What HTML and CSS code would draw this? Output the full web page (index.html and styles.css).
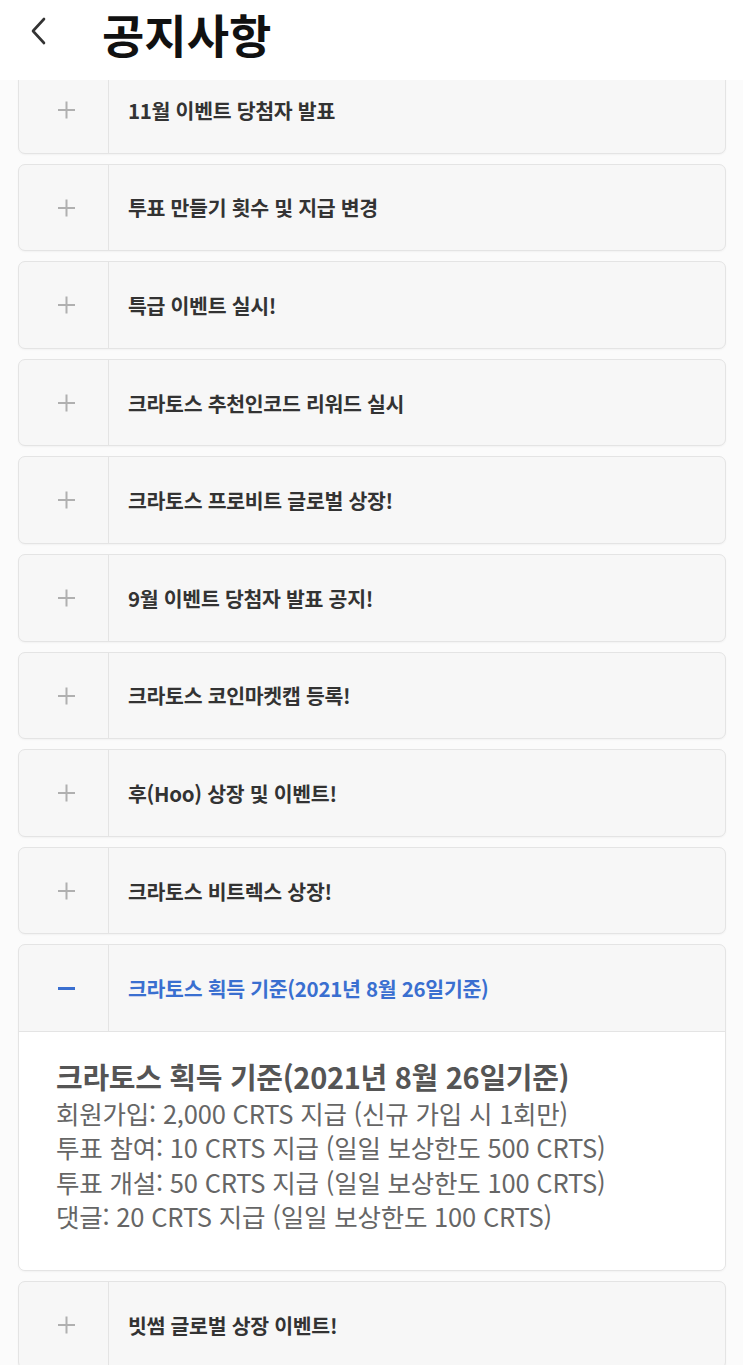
FILE: index.html
```html
<!DOCTYPE html>
<html lang="ko">
<head>
  <meta charset="UTF-8">
  <meta name="viewport" content="width=device-width, initial-scale=1.0">
  <title>공지사항</title>
  <link rel="stylesheet" href="styles.css">
</head>
<body>
  <header class="topbar">
    <a class="back" href="#back" aria-label="뒤로">
      <svg width="20" height="30" viewBox="0 0 20 30"><path d="M16 3 L5 15 L16 27" fill="none" stroke="#333" stroke-width="2.6" stroke-linecap="round" stroke-linejoin="round"/></svg>
    </a>
    <h1>공지사항</h1>
  </header>

  <main class="notice-list">
    <div class="notice">
      <div class="notice-head"><span class="toggle plus"></span><span class="notice-title">11월 이벤트 당첨자 발표</span></div>
    </div>
    <div class="notice">
      <div class="notice-head"><span class="toggle plus"></span><span class="notice-title">투표 만들기 횟수 및 지급 변경</span></div>
    </div>
    <div class="notice">
      <div class="notice-head"><span class="toggle plus"></span><span class="notice-title">특급 이벤트 실시!</span></div>
    </div>
    <div class="notice">
      <div class="notice-head"><span class="toggle plus"></span><span class="notice-title">크라토스 추천인코드 리워드 실시</span></div>
    </div>
    <div class="notice">
      <div class="notice-head"><span class="toggle plus"></span><span class="notice-title">크라토스 프로비트 글로벌 상장!</span></div>
    </div>
    <div class="notice">
      <div class="notice-head"><span class="toggle plus"></span><span class="notice-title">9월 이벤트 당첨자 발표 공지!</span></div>
    </div>
    <div class="notice">
      <div class="notice-head"><span class="toggle plus"></span><span class="notice-title">크라토스 코인마켓캡 등록!</span></div>
    </div>
    <div class="notice">
      <div class="notice-head"><span class="toggle plus"></span><span class="notice-title">후(Hoo) 상장 및 이벤트!</span></div>
    </div>
    <div class="notice">
      <div class="notice-head"><span class="toggle plus"></span><span class="notice-title">크라토스 비트렉스 상장!</span></div>
    </div>
    <div class="notice open">
      <div class="notice-head"><span class="toggle minus"></span><span class="notice-title">크라토스 획득 기준(2021년 8월 26일기준)</span></div>
      <div class="notice-body">
        <h2>크라토스 획득 기준(2021년 8월 26일기준)</h2>
        <p>회원가입: 2,000 CRTS 지급 (신규 가입 시 1회만)</p>
        <p>투표 참여: 10 CRTS 지급 (일일 보상한도 500 CRTS)</p>
        <p>투표 개설: 50 CRTS 지급 (일일 보상한도 100 CRTS)</p>
        <p>댓글: 20 CRTS 지급 (일일 보상한도 100 CRTS)</p>
      </div>
    </div>
    <div class="notice">
      <div class="notice-head"><span class="toggle plus"></span><span class="notice-title">빗썸 글로벌 상장 이벤트!</span></div>
    </div>
  </main>
</body>
</html>
```

FILE: styles.css
```css
:root {
  --page-bg: #fbfbfb;
  --card-bg: #f7f7f7;
  --line: #e4e4e4;
  --text: #333333;
  --accent: #3a6fd0;
}

body {
  margin: 0;
  background-color: var(--page-bg);
  font-family: "Noto Sans CJK KR", "Noto Sans", sans-serif;
  color: var(--text);
}

/* header stays on top of the scrolled list */
.topbar {
  position: fixed;
  top: 0;
  left: 0;
  right: 0;
  height: 80px;
  background-color: #fff;
  display: flex;
  align-items: center;
  z-index: 10;
}

.back {
  display: flex;
  margin-left: 28px;
  margin-top: -18px;
}

.topbar h1 {
  margin: -14px 0 0 54px;
  font-size: 46px;
  font-weight: 700;
  color: #111;
  letter-spacing: 0;
}

.notice-list {
  display: flex;
  flex-direction: column;
  gap: 10px;
  padding: 66px 17px 20px 18px;
}

.notice {
  background-color: var(--card-bg);
  border: 1px solid var(--line);
  border-radius: 7px;
  box-shadow: 0 1px 2px rgba(0, 0, 0, 0.04);
  overflow: hidden;
}

.notice-head {
  display: flex;
  height: 85.6px;
}

.toggle {
  width: 89px;
  flex-shrink: 0;
  border-right: 1px solid var(--line);
  position: relative;
}

.toggle::before,
.toggle::after {
  content: "";
  position: absolute;
  left: 39px;
  top: 42px;
  width: 17px;
  height: 2px;
  background-color: #b0b0b0;
}

.plus::after {
  transform: rotate(90deg);
}

.minus::before {
  background-color: var(--accent);
  height: 3px;
}

.minus::after {
  display: none;
}

.notice-title {
  display: flex;
  align-items: center;
  padding-left: 19px;
  font-size: 20.5px;
  font-weight: 700;
  letter-spacing: -0.3px;
  color: var(--text);
}

.open .notice-head {
  border-bottom: 1px solid var(--line);
}

.open .notice-title {
  color: var(--accent);
}

.notice-body {
  background-color: #fff;
  padding: 25px 20px 36px 37px;
  color: #666;
}

.notice-body h2 {
  margin: 0;
  font-size: 29px;
  font-weight: 700;
  color: #555;
  letter-spacing: -0.3px;
  line-height: 39px;
}

.notice-body p {
  margin: 0;
  font-size: 25.5px;
  line-height: 34.5px;
  letter-spacing: -0.2px;
}
```
